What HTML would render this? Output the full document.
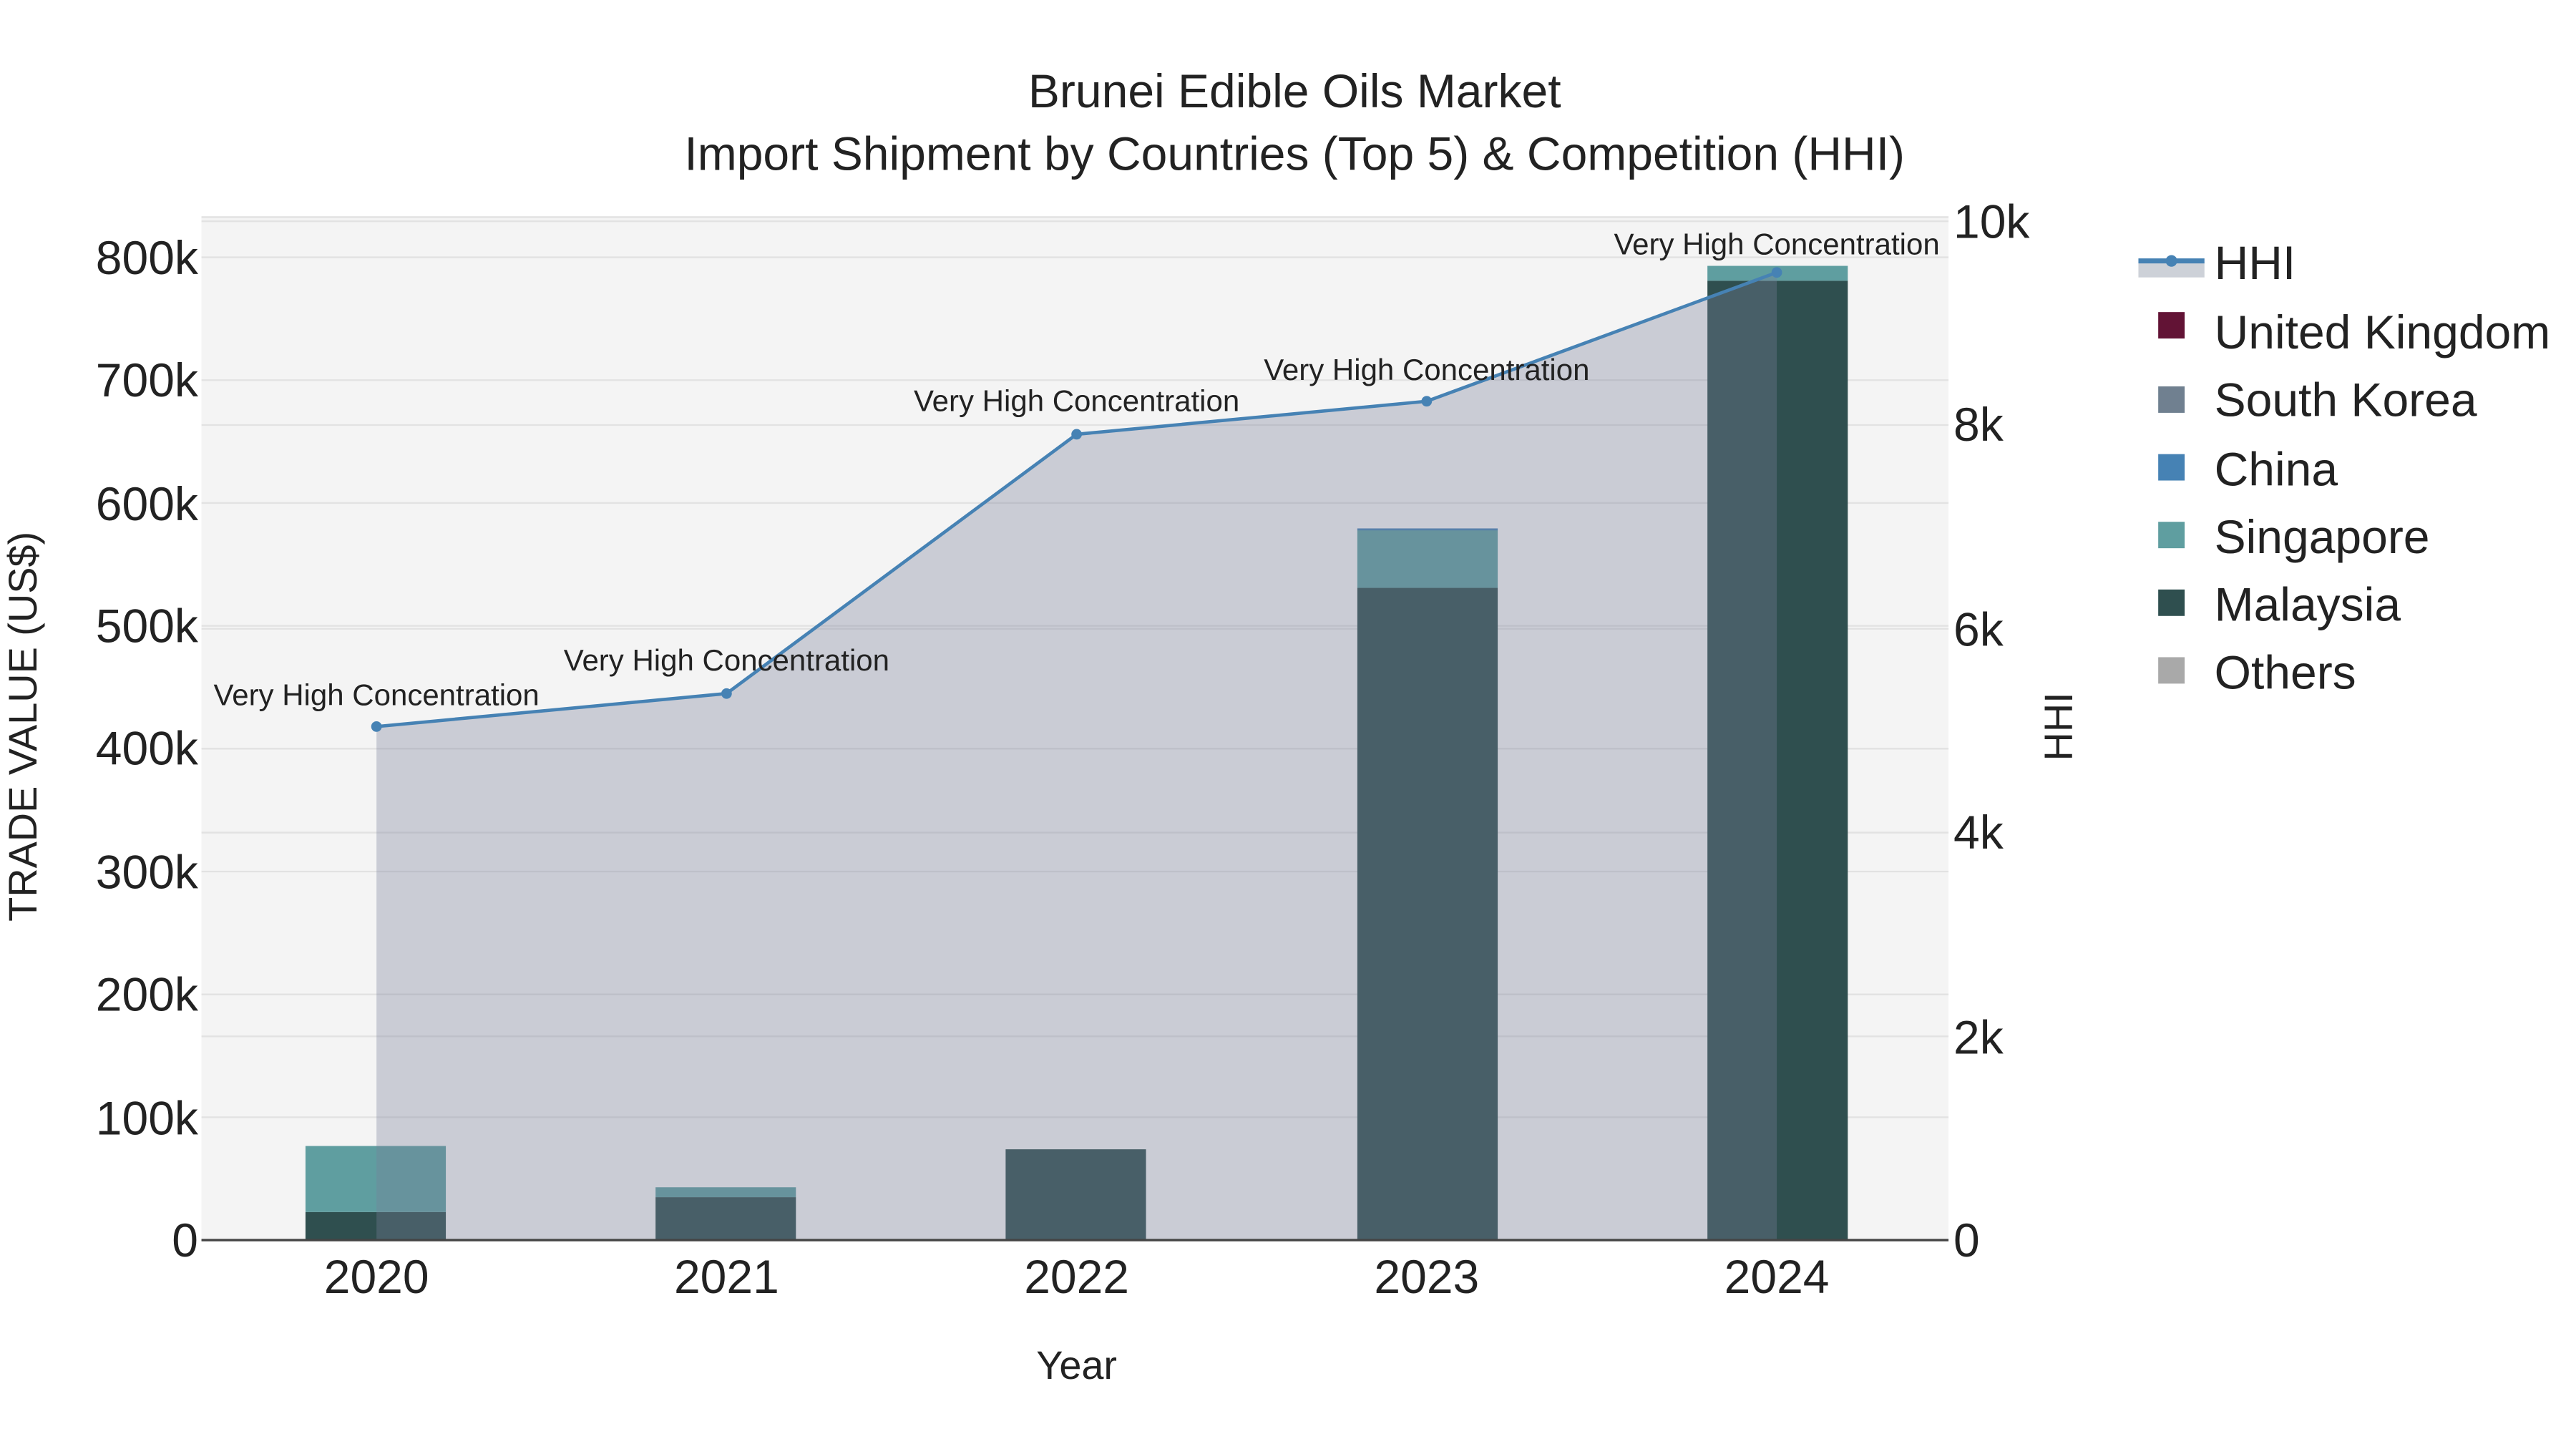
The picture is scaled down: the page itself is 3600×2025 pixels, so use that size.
<!DOCTYPE html>
<html><head><meta charset="utf-8"><style>
html,body{margin:0;padding:0;background:#fff;}
svg{display:block;}
text{font-family:"Liberation Sans",sans-serif;fill:#222;}
</style></head><body>
<svg width="3600" height="2025" viewBox="0 0 1560 877.5" xmlns="http://www.w3.org/2000/svg">
<rect x="0" y="0" width="1560" height="877.5" fill="#fff"/>
<rect x="122" y="131" width="1058" height="620" fill="#f4f4f4"/>
<g stroke="#e2e2e2" stroke-width="1">
<line x1="122" y1="131.5" x2="1180" y2="131.5"/>
<line x1="122" y1="676.6" x2="1180" y2="676.6"/>
<line x1="122" y1="602.2" x2="1180" y2="602.2"/>
<line x1="122" y1="527.8" x2="1180" y2="527.8"/>
<line x1="122" y1="453.4" x2="1180" y2="453.4"/>
<line x1="122" y1="379" x2="1180" y2="379"/>
<line x1="122" y1="304.6" x2="1180" y2="304.6"/>
<line x1="122" y1="230.2" x2="1180" y2="230.2"/>
<line x1="122" y1="155.8" x2="1180" y2="155.8"/>
<line x1="122" y1="627.6" x2="1180" y2="627.6"/>
<line x1="122" y1="504.2" x2="1180" y2="504.2"/>
<line x1="122" y1="380.8" x2="1180" y2="380.8"/>
<line x1="122" y1="257.4" x2="1180" y2="257.4"/>
<line x1="122" y1="134" x2="1180" y2="134"/>
</g>
<g>
<rect x="185" y="734" width="85" height="17" fill="#2f4f4f"/>
<rect x="185" y="694" width="85" height="40" fill="#5f9ea0"/>
<rect x="397" y="725" width="85" height="26" fill="#2f4f4f"/>
<rect x="397" y="719" width="85" height="6" fill="#5f9ea0"/>
<rect x="609" y="696" width="85" height="55" fill="#2f4f4f"/>
<rect x="822" y="356" width="85" height="395" fill="#2f4f4f"/>
<rect x="822" y="321" width="85" height="35" fill="#5f9ea0"/>
<rect x="822" y="320" width="85" height="1.2" fill="#4682b4"/>
<rect x="1034" y="170" width="85" height="581" fill="#2f4f4f"/>
<rect x="1034" y="161" width="85" height="9" fill="#5f9ea0"/>
</g>
<path d="M228,440 L440,420 L652,263 L864,243 L1076,165 L1076,751 L228,751 Z" fill="rgb(119,127,151)" fill-opacity="0.34"/>
<line x1="122" y1="751" x2="1180" y2="751" stroke="#444" stroke-width="1.5"/>
<polyline points="228,440 440,420 652,263 864,243 1076,165" fill="none" stroke="#4682b4" stroke-width="2"/>
<g fill="#4682b4">
<circle cx="228" cy="440" r="3.2"/><circle cx="440" cy="420" r="3.2"/><circle cx="652" cy="263" r="3.2"/><circle cx="864" cy="243" r="3.2"/><circle cx="1076" cy="165" r="3.2"/>
</g>
<g font-size="18.2" text-anchor="middle">
<text x="228" y="427">Very High Concentration</text>
<text x="440" y="406">Very High Concentration</text>
<text x="652" y="249">Very High Concentration</text>
<text x="864" y="230">Very High Concentration</text>
<text x="1076" y="154">Very High Concentration</text>
</g>
<g font-size="28.6" text-anchor="middle">
<text x="784" y="65">Brunei Edible Oils Market</text>
<text x="784" y="103">Import Shipment by Countries (Top 5) &amp; Competition (HHI)</text>
</g>
<g font-size="28.6" text-anchor="end">
<text x="120" y="761">0</text>
<text x="120" y="687">100k</text>
<text x="120" y="612">200k</text>
<text x="120" y="538">300k</text>
<text x="120" y="463">400k</text>
<text x="120" y="389">500k</text>
<text x="120" y="315">600k</text>
<text x="120" y="240">700k</text>
<text x="120" y="166">800k</text>
</g>
<g font-size="28.6" text-anchor="start">
<text x="1183" y="761">0</text>
<text x="1183" y="638">2k</text>
<text x="1183" y="514">4k</text>
<text x="1183" y="391">6k</text>
<text x="1183" y="267">8k</text>
<text x="1183" y="144">10k</text>
</g>
<g font-size="28.6" text-anchor="middle">
<text x="228" y="783">2020</text>
<text x="440" y="783">2021</text>
<text x="652" y="783">2022</text>
<text x="864" y="783">2023</text>
<text x="1076" y="783">2024</text>
</g>
<text x="652" y="835" font-size="24.2" text-anchor="middle">Year</text>
<text transform="translate(22,440) rotate(-90)" font-size="24.2" text-anchor="middle">TRADE VALUE (US$)</text>
<text transform="translate(1255,440) rotate(-90)" font-size="24.2" text-anchor="middle">HHI</text>
<rect x="1295" y="159" width="40" height="9" fill="#cdd1d8"/>
<line x1="1295" y1="158" x2="1335" y2="158" stroke="#4682b4" stroke-width="3"/>
<circle cx="1315" cy="158" r="3.5" fill="#4682b4"/>
<rect x="1307" y="189" width="16" height="16" fill="#621335"/>
<rect x="1307" y="234" width="16" height="16" fill="#708090"/>
<rect x="1307" y="275" width="16" height="16" fill="#4682b4"/>
<rect x="1307" y="316" width="16" height="16" fill="#5f9ea0"/>
<rect x="1307" y="357" width="16" height="16" fill="#2f4f4f"/>
<rect x="1307" y="398" width="16" height="16" fill="#a9a9a9"/>
<g font-size="28.6">
<text x="1341" y="169">HHI</text>
<text x="1341" y="211">United Kingdom</text>
<text x="1341" y="252">South Korea</text>
<text x="1341" y="294">China</text>
<text x="1341" y="335">Singapore</text>
<text x="1341" y="376">Malaysia</text>
<text x="1341" y="417">Others</text>
</g>
</svg>
</body></html>
